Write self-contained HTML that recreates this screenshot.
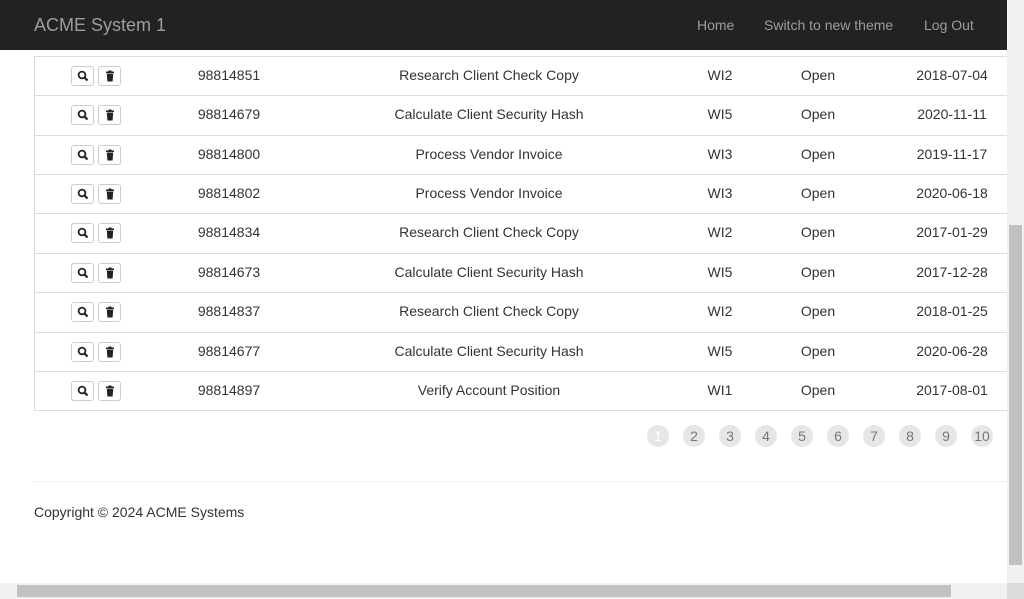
<!DOCTYPE html>
<html><head><style>
body{margin:0;width:1024px;height:599px;overflow:hidden;position:relative;font-family:"Liberation Sans",sans-serif;font-size:14px;color:#333;background:#fff}
.nav{position:absolute;left:0;top:0;width:1007px;height:50px;background:#222}
.brand{position:absolute;left:34px;top:15px;font-size:18px;color:#9d9d9d}
.nl{position:absolute;top:17px;color:#9d9d9d;font-size:14px}
.row{position:absolute;left:34px;width:973px;height:39px;border-top:1px solid #ddd}
.row span{position:absolute;top:10px;transform:translateX(-50%);white-space:nowrap}
.b{position:absolute;top:9px;width:23px;height:20px;border:1px solid #ccc;border-radius:3px;background:#fff;box-sizing:border-box}
.tbl{position:absolute;left:34px;top:56px;width:973px;height:354px;border-left:1px solid #ddd;border-bottom:1px solid #ddd}
.pg{position:absolute;top:425px;width:22px;height:22px;border-radius:50%;background:#e6e6e6;color:#777;text-align:center;line-height:22px;font-size:14px}
</style></head><body>
<div class="nav"><div class="brand">ACME System 1</div>
<div class="nl" style="left:697px">Home</div><div class="nl" style="left:764px">Switch to new theme</div><div class="nl" style="left:924px">Log Out</div></div>
<div class="tbl"></div>
<div id="rows"></div>
<script>
var d=[["98814851","Research Client Check Copy","WI2","2018-07-04"],["98814679","Calculate Client Security Hash","WI5","2020-11-11"],["98814800","Process Vendor Invoice","WI3","2019-11-17"],["98814802","Process Vendor Invoice","WI3","2020-06-18"],["98814834","Research Client Check Copy","WI2","2017-01-29"],["98814673","Calculate Client Security Hash","WI5","2017-12-28"],["98814837","Research Client Check Copy","WI2","2018-01-25"],["98814677","Calculate Client Security Hash","WI5","2020-06-28"],["98814897","Verify Account Position","WI1","2017-08-01"]];
var tops=[56,95,135,174,213,253,292,332,371],h="";
var mag='<svg width="12" height="12" viewBox="0 0 12 12" style="position:absolute;left:5px;top:3px"><circle cx="5" cy="5" r="3.4" fill="none" stroke="#222" stroke-width="1.8"/><path d="M7.5 7.5L10.5 10.5" stroke="#222" stroke-width="2.2"/></svg>';
var bin='<svg width="12" height="12" viewBox="0 0 12 12" style="position:absolute;left:5px;top:3px"><rect x="2" y="1.5" width="8" height="1.6" fill="#222"/><rect x="4.5" y="0.5" width="3" height="1.2" fill="#222"/><path d="M2.8 3.6H9.2L8.6 11.5H3.4Z" fill="#222"/></svg>';
d.forEach(function(r,i){h+='<div class="row" style="top:'+tops[i]+'px"><div class="b" style="left:37px">'+mag+'</div><div class="b" style="left:64px">'+bin+'</div><span style="left:195px">'+r[0]+'</span><span style="left:455px">'+r[1]+'</span><span style="left:686px">'+r[2]+'</span><span style="left:784px">Open</span><span style="left:918px">'+r[3]+'</span></div>';});
for(var i=1;i<=10;i++){h+='<div class="pg" style="left:'+(647+(i-1)*36)+'px;'+(i==1?'color:#fff':'')+'">'+i+'</div>';}
document.getElementById('rows').innerHTML=h;
</script>
<div style="position:absolute;left:34px;top:481px;width:973px;border-top:1px solid #eee"></div>
<div style="position:absolute;left:34px;top:504px">Copyright © 2024 ACME Systems</div>
<div style="position:absolute;left:1007px;top:0;width:17px;height:583px;background:#f1f1f1"></div>
<div style="position:absolute;left:1009px;top:225px;width:13px;height:340px;background:#c1c1c1"></div>
<div style="position:absolute;left:0;top:583px;width:1007px;height:16px;background:#f1f1f1"></div>
<div style="position:absolute;left:17px;top:585px;width:934px;height:12px;background:#c1c1c1"></div>
<div style="position:absolute;left:1007px;top:583px;width:17px;height:16px;background:#dcdcdc"></div>
</body></html>
